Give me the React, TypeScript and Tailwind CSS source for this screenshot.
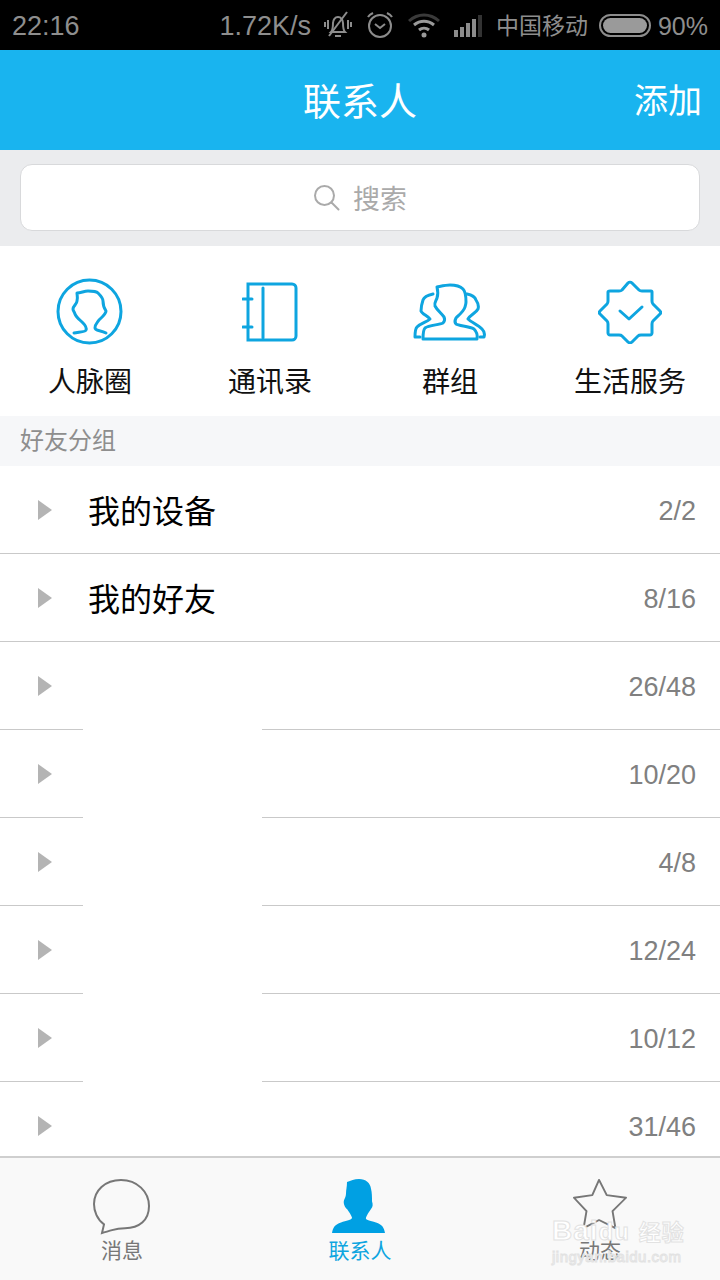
const FONT = 'font-["Liberation_Sans","Noto_Sans_CJK_SC",sans-serif]'

const GROUPS = [
  { name: '我的设备', count: '2/2' },
  { name: '我的好友', count: '8/16' },
  { name: '', count: '26/48' },
  { name: '', count: '10/20' },
  { name: '', count: '4/8' },
  { name: '', count: '12/24' },
  { name: '', count: '10/12' },
  { name: '', count: '31/46' },
]

function MuteIcon() {
  return (
    <svg width="30" height="28" viewBox="0 0 30 28" fill="none" stroke="#8c8c8c" strokeWidth="2">
      <path d="M8 21c2-2 2-5 2-9 0-3 2-6 5-6s5 3 5 6c0 4 0 7 2 9z" />
      <path d="M12 25h6" />
      <path d="M6 25L24 1" />
      <path d="M5 9v9M2 11v5M25 9v9M28 11v5" />
    </svg>
  )
}

function AlarmIcon() {
  return (
    <svg width="28" height="28" viewBox="0 0 28 28" fill="none" stroke="#8c8c8c" strokeWidth="2">
      <circle cx="14" cy="15" r="11" />
      <path d="M9 13l5 4 5-4" />
      <path d="M2 6c1-2 3-3 5-4M26 6c-1-2-3-3-5-4" />
    </svg>
  )
}

function WifiIcon() {
  return (
    <svg width="32" height="26" viewBox="0 0 32 26" fill="none" strokeWidth="3">
      <path d="M1 9c9-8 21-8 30 0" stroke="#3a3a3a" />
      <path d="M6 13c6-5 14-5 20 0" stroke="#9a9a9a" />
      <path d="M11 18c3-2.500 7-2.500 10 0" stroke="#9a9a9a" />
      <circle cx="16" cy="23" r="2.500" fill="#9a9a9a" stroke="none" />
    </svg>
  )
}

function SignalIcon() {
  return (
    <div className="flex items-end gap-[2px] h-[23px]">
      <span className="w-[4px] h-[7px] bg-[#8c8c8c]" />
      <span className="w-[4px] h-[10px] bg-[#8c8c8c]" />
      <span className="w-[4px] h-[14px] bg-[#8c8c8c]" />
      <span className="w-[4px] h-[18px] bg-[#8c8c8c]" />
      <span className="w-[4px] h-[22px] bg-[#333333]" />
    </div>
  )
}

function BatteryIcon() {
  return (
    <div className="w-[52px] h-[23px] rounded-full border-2 border-[#8c8c8c] p-[2px]">
      <div className="h-full w-full rounded-full bg-[#9a9a9a]" />
    </div>
  )
}

function StatusBar() {
  return (
    <div className="h-[50px] shrink-0 bg-black flex items-center text-[#8e8e8e] pl-[12px] pr-[12px]">
      <span className="text-[27px] pt-[3px]">22:16</span>
      <div className="ml-auto flex items-center">
        <span className="text-[27px] pt-[3px] mr-[12px]">1.72K/s</span>
        <MuteIcon />
        <span className="ml-[13px]"><AlarmIcon /></span>
        <span className="ml-[14px]"><WifiIcon /></span>
        <span className="ml-[14px]"><SignalIcon /></span>
        <span className="ml-[14px] text-[23px] pt-[3px]">中国移动</span>
        <span className="ml-[11px]"><BatteryIcon /></span>
        <span className="ml-[7px] text-[25px] pt-[3px]">90%</span>
      </div>
    </div>
  )
}

function PeopleCircleIcon() {
  return (
    <svg width="68" height="68" viewBox="0 0 68 68" fill="none" stroke="#0ea5e0" strokeWidth="3" strokeLinecap="round" strokeLinejoin="round">
      <circle cx="33.500" cy="33.500" r="31.500" />
      <path d="M18 55c4-1 12-1 12-3 1-3-1-5-3-7-3-3-7-6-8-9-1-3-2-3-2-5 0-3 4-5 4-8 1-3 0-6 0-8 4 0 7-2 11-2 5 0 9 1 10 2 3 3 5 6 5 8 0 4 1 7 3 10 0 3-5 7-7 9-2 3-4 4-4 8 0 3 6 2 11 5" />
    </svg>
  )
}

function BookIcon() {
  return (
    <svg width="56" height="60" viewBox="0 0 56 60" fill="none" stroke="#0ea5e0" strokeWidth="3" strokeLinecap="round">
      <path d="M6 2h44a4 4 0 0 1 4 4v48a4 4 0 0 1-4 4H6z" />
      <path d="M21 6v50" />
      <path d="M1 17h9M1 45h9" />
    </svg>
  )
}

function GroupIcon() {
  return (
    <svg width="74" height="58" viewBox="0 0 74 58" fill="none" stroke="#0ea5e0" strokeWidth="3" strokeLinecap="round" strokeLinejoin="round">
      <path d="M10 56h54c1-5-1-8-3-10-5-3-15-3-18-5-2-2-1-4 0-6 3-3 8-7 9-11 1-3 1-3 1-5 0-4-1-11-3-13-3-3-9-4-13-4-4 0-8 1-13 2 1 4 1 8 0 11-1 3-3 5-2 8 2 4 6 7 9 11 1 2 1 4-1 6-4 2-14 2-18 5-2 2-2 6-2 11z" />
      <path d="M20 11c-5 1-9 3-10 6-1 3-2 8-2 11 1 3 7 5 9 8-3 3-9 4-13 8-2 2-2 7-2 10h5" />
      <path d="M54 11c5 1 8 3 9 6 2 3 3 6 2 9-2 4-8 6-10 10 3 3 10 6 14 10 2 2 3 5 2 8h-4" />
    </svg>
  )
}

function BadgeIcon() {
  return (
    <svg width="64" height="64" viewBox="0 0 64 64" fill="none" stroke="#0ea5e0" strokeWidth="3" strokeLinecap="round" strokeLinejoin="round">
      <path d="M30 3c1-1 3-1 4 0l7 7c1 1 2 1 3 1h9c1 0 1 1 1 1v9c0 1 0 2 1 3l7 7c1 1 1 2 0 3l-7 7c-1 1-1 2-1 3v9c0 1-1 2-2 2h-9c-1 0-2 0-3 1l-6 6c-1 1-3 1-4 0l-6-6c-1-1-2-1-3-1h-9c-1 0-2-1-2-2v-9c0-1 0-2-1-3l-7-7c-1-1-1-2 0-3l7-7c1-1 1-2 1-3v-9c0-1 1-1 2-1h9c1 0 2 0 3-1z" />
      <path d="M22 31l9 8 13-12" />
    </svg>
  )
}

const SHORTCUTS = [
  { label: '人脉圈', icon: <PeopleCircleIcon /> },
  { label: '通讯录', icon: <BookIcon /> },
  { label: '群组', icon: <GroupIcon /> },
  { label: '生活服务', icon: <BadgeIcon /> },
]

function MessageIcon() {
  return (
    <svg width="58" height="56" viewBox="0 0 58 58" preserveAspectRatio="none" fill="none" stroke="#777777" strokeWidth="2">
      <path d="M9 56l2-9C4 42 1 33 1 26 1 12 12 1 28 1c16 0 28 12 28 27 0 15-10 23-24 23-5 0-10 1-13 2-3 1-7 2-10 3z" />
    </svg>
  )
}

function PersonFilledIcon() {
  return (
    <svg width="56" height="54" viewBox="0 0 56 56" preserveAspectRatio="none" fill="#00a0e3">
      <path d="M15 3c4-1 7-3 12-3 7 0 11 4 12 10 1 4 1 9 1 13 1 3 1 6-1 8-2 3-4 6-5 9-1 3 4 3 10 5 6 2 8 5 9 11H0c1-6 3-9 9-11 5-2 11-2 11-5-1-3-3-6-5-9-2-1-4-6-3-9 1-3 2-4 2-7 0-4 1-7 1-12z" />
    </svg>
  )
}

function StarIcon() {
  return (
    <svg width="54" height="50" viewBox="0 0 56 56" preserveAspectRatio="none" fill="none" stroke="#777777" strokeWidth="2" strokeLinejoin="round">
      <path d="M27 1l8 17 20 3-14 15 3 19-17-9-16 9 3-19L1 21l19-3z" />
    </svg>
  )
}

function Tab({ label, icon, active, className }: { label: string; icon: React.ReactNode; active?: boolean; className: string }) {
  return (
    <div className={`flex flex-col items-center pt-[21px] ${className}`}>
      <div className="h-[56px] flex items-start">{icon}</div>
      <span className={`mt-[2px] text-[21px] leading-[28px] ${active ? 'text-[#0ea5e0]' : 'text-[#777777]'}`}>{label}</span>
    </div>
  )
}

export default function App() {
  return (
    <div className={`relative w-[720px] h-[1280px] overflow-hidden flex flex-col bg-white ${FONT}`}>
      <StatusBar />

      <div className="h-[100px] shrink-0 bg-[#19b4ef] relative flex items-center justify-center text-white">
        <span className="text-[38px] leading-none pt-[4px]">联系人</span>
        <span className="absolute right-[18px] top-[34px] text-[34px] leading-none">添加</span>
      </div>

      <div className="h-[96px] shrink-0 bg-[#ebecee] px-[20px] pt-[14px]">
        <div className="h-[67px] rounded-[12px] border border-[#d8d9db] bg-white flex items-center justify-center gap-[13px] text-[#aaaaaa]">
          <svg width="27" height="27" viewBox="0 0 27 27" fill="none" stroke="#aaaaaa" strokeWidth="2" strokeLinecap="round">
            <circle cx="11.500" cy="11.500" r="9.500" />
            <path d="M18.500 18.500l7 7" />
          </svg>
          <span className="text-[27px] leading-none pt-[6px]">搜索</span>
        </div>
      </div>

      <div className="h-[170px] shrink-0 grid grid-cols-4">
        {SHORTCUTS.map((item) => (
          <div key={item.label} className="flex flex-col items-center">
            <div className="h-[68px] mt-[32px] flex items-center justify-center">{item.icon}</div>
            <span className="mt-[19px] text-[28px] leading-[36px] text-[#111111]">{item.label}</span>
          </div>
        ))}
      </div>

      <div className="h-[50px] shrink-0 bg-[#f6f7f9] pl-[20px] flex items-center text-[24px] text-[#8e8e8e]">好友分组</div>

      <div className="relative flex-1 overflow-hidden">
        {GROUPS.map((group) => (
          <div key={group.count} className="h-[88px] border-b border-[#c9c9c9] flex items-center pl-[38px] pr-[24px]">
            <span className="w-0 h-0 border-y-[10px] border-y-transparent border-l-[14px] border-l-[#b4b4b4]" />
            <span className="ml-[36px] text-[32px] pt-[5px] text-black">{group.name}</span>
            <span className="ml-auto text-[27px] pt-[4px] text-[#808080]">{group.count}</span>
          </div>
        ))}
        {/* blanked-out names in the source shot */}
        <div className="absolute left-[83px] top-[263px] w-[179px] h-[353px] bg-white" />
      </div>

      <div className="h-[124px] shrink-0 border-t-2 border-[#cfcfcf] bg-[#f9f9f9] flex">
        <Tab className="w-[244px]" label="消息" icon={<MessageIcon />} />
        <Tab className="w-[232px]" label="联系人" icon={<PersonFilledIcon />} active />
        <Tab className="flex-1 pl-[4px]" label="动态" icon={<StarIcon />} />
      </div>

      {/* baidu watermark */}
      <div className="absolute left-[552px] top-[1216px] flex flex-col text-white [-webkit-text-stroke:1px_#e2e2e2] pointer-events-none">
        <span className="text-[28px] leading-[30px] font-bold tracking-[1px]">Bai<span className="text-[24px]">du</span> <span className="text-[22px]">经验</span></span>
        <span className="text-[15px] leading-[18px] tracking-[0.5px]">jingyan.baidu.com</span>
      </div>
    </div>
  )
}
